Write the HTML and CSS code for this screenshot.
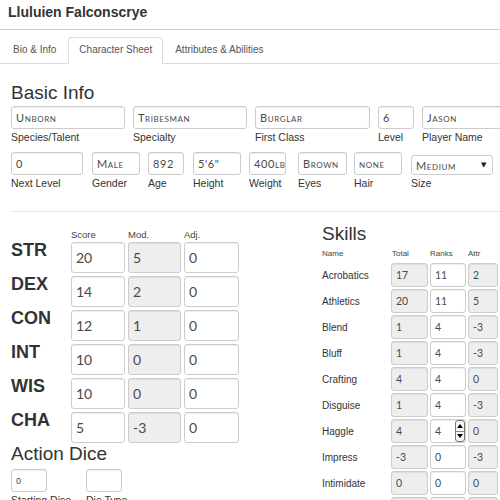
FILE: index.html
```html
<!DOCTYPE html>
<html>
<head>
<meta charset="utf-8">
<title>Lluluien Falconscrye</title>
<link rel="stylesheet" href="styles.css">
</head>
<body>
<div class="page">
  <header class="topbar"><h1 class="title">Lluluien Falconscrye</h1></header>
  <nav class="tabs">
    <a class="tab">Bio &amp; Info</a>
    <a class="tab active">Character Sheet</a>
    <a class="tab">Attributes &amp; Abilities</a>
  </nav>
  <main class="content">
    <h2 class="heading basic">Basic Info</h2>
    <div class="row1">
      <div class="field"><div class="box sc">Unborn</div><div class="label">Species/Talent</div></div>
      <div class="field"><div class="box sc">Tribesman</div><div class="label">Specialty</div></div>
      <div class="field"><div class="box sc">Burglar</div><div class="label">First Class</div></div>
      <div class="field"><div class="box sc">6</div><div class="label">Level</div></div>
      <div class="field"><div class="box sc">Jason</div><div class="label">Player Name</div></div>
    </div>
    <div class="row2">
      <div class="field"><div class="box sc w72">0</div><div class="label">Next Level</div></div>
      <div class="field"><div class="box sc w48">Male</div><div class="label">Gender</div></div>
      <div class="field"><div class="box sc w36">892</div><div class="label">Age</div></div>
      <div class="field"><div class="box sc w48">5'6"</div><div class="label">Height</div></div>
      <div class="field"><div class="box sc w37">400lb</div><div class="label">Weight</div></div>
      <div class="field"><div class="box sc w49">Brown</div><div class="label">Eyes</div></div>
      <div class="field"><div class="box sc w48">none</div><div class="label">Hair</div></div>
      <div class="field"><div class="box sc select w82"><span>Medium</span><span class="caret">&#9660;</span></div><div class="label">Size</div></div>
    </div>
    <div class="divider"></div>
    <div class="stats">
      <section class="abilities">
        <div class="ab-head"><span></span><span>Score</span><span>Mod.</span><span>Adj.</span></div>
        <div class="ab-grid">
          <div class="ab-name">STR</div><div class="box">20</div><div class="box ro">5</div><div class="box">0</div>
          <div class="ab-name">DEX</div><div class="box">14</div><div class="box ro">2</div><div class="box">0</div>
          <div class="ab-name">CON</div><div class="box">12</div><div class="box ro">1</div><div class="box">0</div>
          <div class="ab-name">INT</div><div class="box">10</div><div class="box ro">0</div><div class="box">0</div>
          <div class="ab-name">WIS</div><div class="box">10</div><div class="box ro">0</div><div class="box">0</div>
          <div class="ab-name">CHA</div><div class="box">5</div><div class="box ro">-3</div><div class="box">0</div>
        </div>
        <h2 class="heading">Action Dice</h2>
        <div class="dice-row">
          <div class="field dice-first"><div class="box plain w36">0</div><div class="label">Starting Dice</div></div>
          <div class="field"><div class="box plain w36"></div><div class="label">Die Type</div></div>
        </div>
      </section>
      <section class="skills">
        <h2 class="heading">Skills</h2>
        <div class="sk-head"><span>Name</span><span class="sk-total">Total</span><span>Ranks</span><span>Attr</span><span>Misc</span></div>
        <div class="sk-grid">
          <div class="sk-name">Acrobatics</div><div class="box ro">17</div><div class="box">11</div><div class="box ro">2</div><div class="box ro">4</div>
          <div class="sk-name">Athletics</div><div class="box ro">20</div><div class="box">11</div><div class="box ro">5</div><div class="box ro">4</div>
          <div class="sk-name">Blend</div><div class="box ro">1</div><div class="box">4</div><div class="box ro">-3</div><div class="box ro">0</div>
          <div class="sk-name">Bluff</div><div class="box ro">1</div><div class="box">4</div><div class="box ro">-3</div><div class="box ro">0</div>
          <div class="sk-name">Crafting</div><div class="box ro">4</div><div class="box">4</div><div class="box ro">0</div><div class="box ro">0</div>
          <div class="sk-name">Disguise</div><div class="box ro">1</div><div class="box">4</div><div class="box ro">-3</div><div class="box ro">0</div>
          <div class="sk-name">Haggle</div><div class="box ro">4</div><div class="box spin">4<span class="spinner"><span class="up"></span><span class="down"></span></span></div><div class="box ro">0</div><div class="box ro">0</div>
          <div class="sk-name">Impress</div><div class="box ro">-3</div><div class="box">0</div><div class="box ro">-3</div><div class="box ro">0</div>
          <div class="sk-name">Intimidate</div><div class="box ro">0</div><div class="box">0</div><div class="box ro">0</div><div class="box ro">0</div>
          <div class="sk-name">Investigate</div><div class="box ro">0</div><div class="box">0</div><div class="box ro">0</div><div class="box ro">0</div>
        </div>
      </section>
    </div>
  </main>
</div>
</body>
</html>
```
FILE: styles.css
```css
html, body {
  margin: 0;
  padding: 0;
  overflow: hidden;
  background: #fff;
}
body {
  font-family: "Liberation Sans", Arial, sans-serif;
  color: #333;
}
.page {
  width: 580px;
}
.topbar {
  padding: 4px 8px 9px;
  border-bottom: 1px solid #ccc;
}
.title {
  margin: 0;
  font-size: 14px;
  line-height: 16px;
  font-weight: bold;
  color: #333;
}
.tabs {
  display: flex;
  padding: 7px 0 0 2px;
  border-bottom: 1px solid #ddd;
}
.tab {
  display: block;
  padding: 5px 10px 7px;
  margin: 0 1px -1px 0;
  line-height: 14px;
  font-size: 10px;
  color: #555;
  border: 1px solid transparent;
  border-bottom: 0;
  border-radius: 4px 4px 0 0;
}
.tab.active {
  border-color: #ddd;
  background: #fff;
}
.content {
  padding-left: 11px;
}
.heading {
  margin: 0;
  font-size: 19px;
  line-height: 22px;
  font-weight: normal;
  color: #333;
}
.basic {
  margin-top: 18px;
  margin-bottom: 2px;
}
.row1 {
  display: grid;
  grid-template-columns: 114px 114px 115px 36px 114px;
  column-gap: 8px;
}
.row2 {
  display: grid;
  grid-template-columns: 81px 56px 45px 56px 49px 56px 57px 82px;
  margin-top: 7px;
}
.box {
  box-sizing: border-box;
  height: 23px;
  border: 1px solid #ccc;
  border-radius: 3px;
  padding-left: 4px;
  display: flex;
  align-items: center;
  background: #fff;
  color: #4a4a4a;
  font-family: "Lato", "Liberation Sans", sans-serif;
  font-weight: 400;
  font-size: 11px;
  box-shadow: inset 0 1px 1px rgba(0, 0, 0, 0.075);
  white-space: nowrap;
  overflow: hidden;
}
.sc {
  font-variant: small-caps;
  letter-spacing: 0.6px;
}
.w72 { width: 72px; }
.w48 { width: 48px; }
.w36 { width: 36px; }
.w37 { width: 37px; }
.w49 { width: 49px; }
.w82 { width: 82px; }
.select {
  height: 20px;
  margin-top: 3px;
  justify-content: space-between;
  padding-right: 5px;
  box-shadow: none;
}
.caret {
  font-size: 7px;
  color: #222;
  font-family: "DejaVu Sans", sans-serif;
}
.label {
  font-size: 10.5px;
  line-height: 16px;
  color: #333;
  white-space: nowrap;
}
.divider {
  margin-top: 20px;
  border-top: 1px solid #e5e5e5;
}
.stats {
  display: flex;
}
.abilities {
  width: 311px;
  flex: none;
  padding-top: 17px;
}
.ab-head,
.ab-grid {
  display: grid;
  grid-template-columns: 57px 54px 53px 55px;
  column-gap: 3px;
}
.ab-head {
  font-size: 9.5px;
  line-height: 12px;
  margin-bottom: 1px;
  color: #444;
}
.ab-grid {
  row-gap: 3px;
}
.ab-name {
  font-size: 18px;
  font-weight: bold;
  line-height: 16px;
  color: #333;
}
.ab-grid .box {
  height: 31px;
  font-size: 14px;
}
.ro {
  background: #eee;
}
.dice-row {
  display: flex;
  margin-top: 4px;
}
.dice-first {
  width: 75px;
}
.plain {
  font-family: "Liberation Sans", Arial, sans-serif;
  font-weight: normal;
  font-size: 9px;
}
.skills {
  flex: none;
  padding-top: 11px;
}
.sk-head,
.sk-grid {
  display: grid;
  grid-template-columns: 67px 37px 36px 30px 36px;
  column-gap: 2px;
}
.sk-head {
  font-size: 8px;
  line-height: 10px;
  margin: 4px 0 4px;
  color: #444;
}
.sk-total {
  padding-left: 1px;
}
.sk-grid {
  row-gap: 2px;
  grid-auto-rows: 24px;
}
.sk-name {
  font-size: 10px;
  align-self: center;
  color: #333;
}
.sk-grid .box {
  height: 24px;
  font-size: 10.5px;
}
.spin {
  position: relative;
}
.spinner {
  position: absolute;
  right: 0;
  top: 0;
  bottom: 0;
  width: 10px;
  box-sizing: border-box;
  border: 1px solid #777;
  border-radius: 3px;
  background: #f6f6f6;
  display: flex;
  flex-direction: column;
}
.spinner span {
  flex: 1;
  display: flex;
  align-items: center;
  justify-content: center;
}
.spinner .down {
  border-top: 1px solid #888;
}
.up::before {
  content: "";
  border-left: 3px solid transparent;
  border-right: 3px solid transparent;
  border-bottom: 4px solid #000;
}
.down::before {
  content: "";
  border-left: 3px solid transparent;
  border-right: 3px solid transparent;
  border-top: 4px solid #000;
}
```
